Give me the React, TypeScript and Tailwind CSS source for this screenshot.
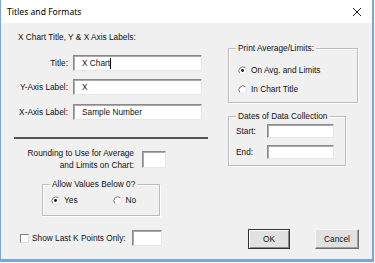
import React from "react";

function Radio({ checked }: { checked?: boolean }) {
  return (
    <svg width="9" height="9" viewBox="0 0 9 9" className="shrink-0">
      <circle cx="4.5" cy="4.5" r="4" fill="#ffffff" stroke="#e3e3e3" />
      <path d="M 7.3 1.7 A 4 4 0 0 0 1.7 7.3" stroke="#7a7a7a" fill="none" />
      {checked && <circle cx="4.5" cy="4.5" r="1.4" fill="#111111" />}
    </svg>
  );
}

function TextBox({ className, value, caret }: { className: string; value?: string; caret?: boolean }) {
  return (
    <div
      className={`flex items-center bg-white border border-t-[#8a8a8a] border-l-[#8a8a8a] border-r-[#e6e6e6] border-b-[#e6e6e6] shadow-[inset_1px_1px_0_#a9a9a9] pl-[8px] ${className}`}
    >
      {value && <span className="leading-[11px] text-[#111]">{value}</span>}
      {caret && <span className="w-px h-[11px] bg-black" />}
    </div>
  );
}

function Group({ className, title, children }: { className: string; title: string; children?: React.ReactNode }) {
  return (
    <div
      className={`relative border border-[#bcbcbc] shadow-[inset_1px_1px_0_#ffffff,1px_1px_0_#ffffff] ${className}`}
    >
      <span className="absolute left-[7px] -top-[6px] px-[2px] bg-[#f0f0f0] leading-[11px] text-[#111]">
        {title}
      </span>
      {children}
    </div>
  );
}

export default function App() {
  return (
    <div className="w-[375px] h-[263px] bg-[#f7f9fc] font-['Liberation_Sans',Arial,sans-serif] text-[8.3px] text-[#111]">
      <div className="w-[374px] h-[262px] flex flex-col border-l border-r-2 border-b-[3px] border-[#7aa6da]">
        {/* Title bar */}
        <div className="h-[23px] shrink-0 bg-white flex items-center justify-between pl-[6px] pr-[6px]">
          <span className="font-['Noto_Sans',sans-serif] text-[8.6px] leading-[12px] text-black">
            Titles and Formats
          </span>
          <svg width="10" height="10" viewBox="0 0 10 10" className="mr-[4px]">
            <path d="M1 1 L9 9 M9 1 L1 9" stroke="#222" strokeWidth="1" />
          </svg>
        </div>

        {/* Body */}
        <div className="flex-1 bg-[#f0f0f0] flex">
          {/* Left column */}
          <div className="ml-[13px] w-[195px] flex flex-col">
            <div className="mt-[9px] pl-[4px] leading-[11px]">X Chart Title, Y &amp; X Axis Labels:</div>

            <div className="mt-[12px] flex items-center h-[16px]">
              <span className="w-[54px] text-right leading-[11px]">Title:</span>
              <TextBox className="ml-[5px] w-[129px] h-[16px]" value="X Chart" caret />
            </div>
            <div className="mt-[8px] flex items-center h-[16px]">
              <span className="w-[54px] text-right leading-[11px]">Y-Axis Label:</span>
              <TextBox className="ml-[5px] w-[129px] h-[16px]" value="X" />
            </div>
            <div className="mt-[9px] flex items-center h-[16px]">
              <span className="w-[54px] text-right leading-[11px]">X-Axis Label:</span>
              <TextBox className="ml-[5px] w-[129px] h-[16px]" value="Sample Number" />
            </div>

            <div className="mt-[17px] w-[194px] h-[2px] bg-[#555555]" />

            <div className="mt-[8px] flex items-center h-[24px]">
              <div className="w-[120px] text-right leading-[12px]">
                <div>Rounding to Use for Average</div>
                <div>and Limits on Chart:</div>
              </div>
              <TextBox className="ml-[8px] w-[24px] h-[17px]" />
            </div>

            <Group className="mt-[13px] ml-[28px] w-[118px] h-[32px]" title="Allow Values Below 0?">
              <div className="pt-[10px] pl-[8px] flex items-center h-[21px]">
                <Radio checked />
                <span className="ml-[4px] leading-[11px]">Yes</span>
                <div className="ml-[35px] flex items-center">
                  <Radio />
                  <span className="ml-[4px] leading-[11px]">No</span>
                </div>
              </div>
            </Group>

            <div className="mt-[14px] flex items-center h-[16px]">
              <div className="ml-[6px] w-[9px] h-[9px] bg-white border border-t-[#808080] border-l-[#808080] border-r-[#dcdcdc] border-b-[#dcdcdc]" />
              <span className="ml-[3px] leading-[11px]">Show Last K Points Only:</span>
              <TextBox className="ml-[6px] w-[30px] h-[16px]" />
            </div>
          </div>

          {/* Right column */}
          <div className="ml-[19px] w-[131px] flex flex-col">
            <Group className="mt-[25px] w-[130px] h-[55px]" title="Print Average/Limits:">
              <div className="pt-[16px] pl-[9px] flex flex-col">
                <div className="flex items-center h-[11px]">
                  <Radio checked />
                  <span className="ml-[4px] leading-[11px]">On Avg. and Limits</span>
                </div>
                <div className="mt-[8px] flex items-center h-[11px]">
                  <Radio />
                  <span className="ml-[4px] leading-[11px]">In Chart Title</span>
                </div>
              </div>
            </Group>

            <Group className="mt-[13px] w-[118px] h-[50px]" title="Dates of Data Collection">
              <div className="pt-[7px] pl-[7px] flex flex-col">
                <div className="flex items-center h-[14px]">
                  <span className="w-[31px] leading-[11px]">Start:</span>
                  <TextBox className="w-[67px] h-[14px]" />
                </div>
                <div className="mt-[7px] flex items-center h-[14px]">
                  <span className="w-[31px] leading-[11px]">End:</span>
                  <TextBox className="w-[67px] h-[14px]" />
                </div>
              </div>
            </Group>

            <div className="mt-[63px] flex">
              <button className="ml-[20px] w-[42px] h-[20px] bg-[#e1e1e1] border border-[#333333] shadow-[inset_1px_1px_0_#ffffff,inset_-1px_-1px_0_#888888] leading-[11px] text-[#111]">
                OK
              </button>
              <button className="ml-[25px] w-[44px] h-[20px] bg-[#e1e1e1] border border-t-[#f5f5f5] border-l-[#f5f5f5] border-r-[#6e6e6e] border-b-[#6e6e6e] shadow-[inset_-1px_-1px_0_#a0a0a0] leading-[11px] text-[#111]">
                Cancel
              </button>
            </div>
          </div>
        </div>
      </div>
    </div>
  );
}
